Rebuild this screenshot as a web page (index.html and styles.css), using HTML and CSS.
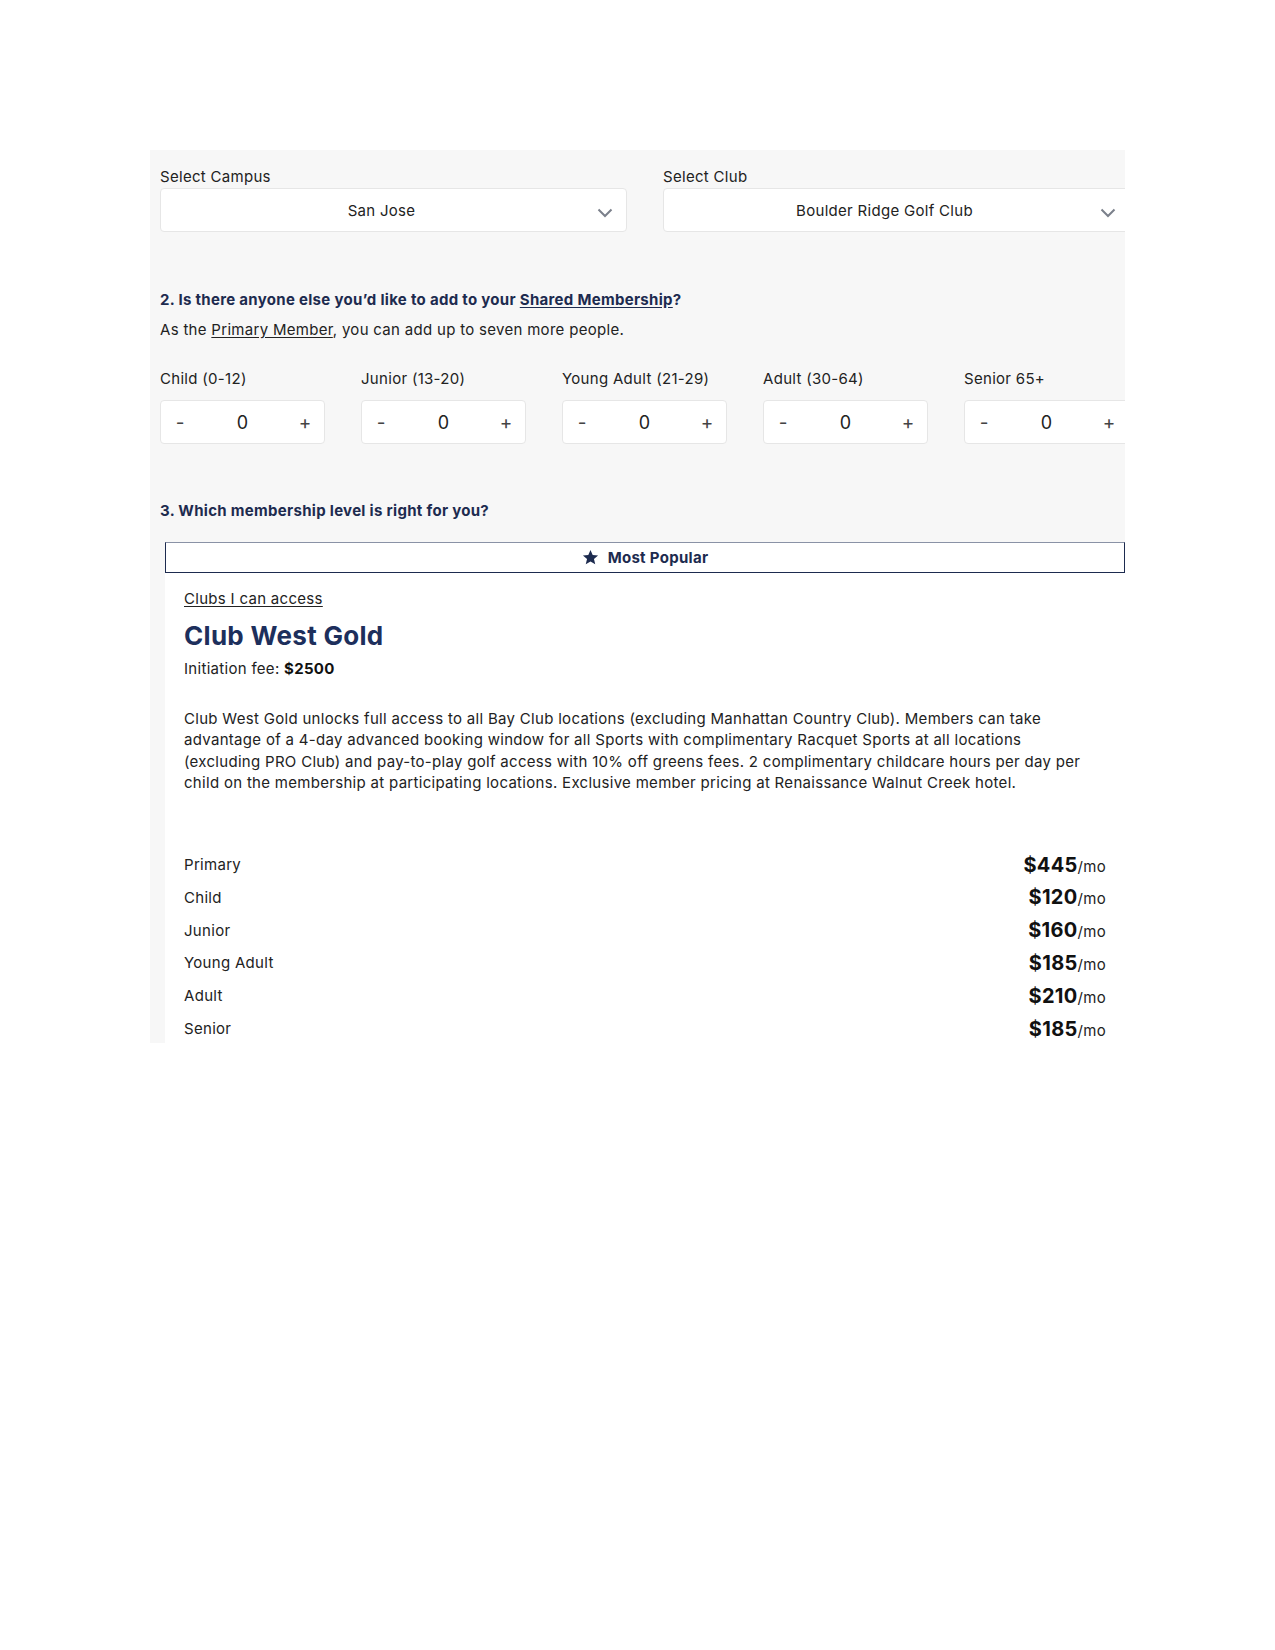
FILE: index.html
```html
<!DOCTYPE html>
<html lang="en">
<head>
<meta charset="utf-8">
<title>Membership</title>
<link rel="stylesheet" href="styles.css">
</head>
<body>
<div class="page">
  <div class="panel">
    <div class="selects">
      <div class="field">
        <div class="field-label">Select Campus</div>
        <div class="select">
          <span class="select-value">San Jose</span>
          <svg class="chevron" width="16" height="10" viewBox="0 0 16 10"><polyline points="1.5,1.5 8,8 14.5,1.5" fill="none" stroke="#7b808b" stroke-width="2"/></svg>
        </div>
      </div>
      <div class="field">
        <div class="field-label">Select Club</div>
        <div class="select">
          <span class="select-value">Boulder Ridge Golf Club</span>
          <svg class="chevron" width="16" height="10" viewBox="0 0 16 10"><polyline points="1.5,1.5 8,8 14.5,1.5" fill="none" stroke="#7b808b" stroke-width="2"/></svg>
        </div>
      </div>
    </div>

    <h2 class="section-title q2">2. Is there anyone else you’d like to add to your <span class="u">Shared Membership</span>?</h2>
    <p class="sub">As the <span class="u">Primary Member</span>, you can add up to seven more people.</p>

    <div class="counters">
      <div class="counter">
        <div class="field-label">Child (0-12)</div>
        <div class="stepper"><span class="btn">-</span><span class="val">0</span><span class="btn">+</span></div>
      </div>
      <div class="counter">
        <div class="field-label">Junior (13-20)</div>
        <div class="stepper"><span class="btn">-</span><span class="val">0</span><span class="btn">+</span></div>
      </div>
      <div class="counter">
        <div class="field-label">Young Adult (21-29)</div>
        <div class="stepper"><span class="btn">-</span><span class="val">0</span><span class="btn">+</span></div>
      </div>
      <div class="counter">
        <div class="field-label">Adult (30-64)</div>
        <div class="stepper"><span class="btn">-</span><span class="val">0</span><span class="btn">+</span></div>
      </div>
      <div class="counter">
        <div class="field-label">Senior 65+</div>
        <div class="stepper"><span class="btn">-</span><span class="val">0</span><span class="btn">+</span></div>
      </div>
    </div>

    <h2 class="section-title q3">3. Which membership level is right for you?</h2>

    <div class="card">
      <div class="banner">
        <svg class="star" width="17" height="17" viewBox="0 0 24 24"><path d="M12 1.5l3.1 7.1 7.6.6-5.8 5 1.8 7.5L12 17.7l-6.7 4 1.8-7.5-5.8-5 7.6-.6z" fill="#1d2b4f"/></svg>
        <span>Most Popular</span>
      </div>
      <div class="card-body">
        <a class="clubs-link">Clubs I can access</a>
        <h3 class="plan-name">Club West Gold</h3>
        <p class="fee">Initiation fee: <b>$2500</b></p>
        <p class="desc">Club West Gold unlocks full access to all Bay Club locations (excluding Manhattan Country Club). Members can take advantage of a 4-day advanced booking window for all Sports with complimentary Racquet Sports at all locations (excluding PRO Club) and pay-to-play golf access with 10% off greens fees. 2 complimentary childcare hours per day per child on the membership at participating locations. Exclusive member pricing at Renaissance Walnut Creek hotel.</p>
        <div class="prices">
          <div class="price-row"><span>Primary</span><span class="amt"><b>$445</b>/mo</span></div>
          <div class="price-row"><span>Child</span><span class="amt"><b>$120</b>/mo</span></div>
          <div class="price-row"><span>Junior</span><span class="amt"><b>$160</b>/mo</span></div>
          <div class="price-row"><span>Young Adult</span><span class="amt"><b>$185</b>/mo</span></div>
          <div class="price-row"><span>Adult</span><span class="amt"><b>$210</b>/mo</span></div>
          <div class="price-row"><span>Senior</span><span class="amt"><b>$185</b>/mo</span></div>
        </div>
      </div>
    </div>
  </div>
</div>
</body>
</html>
```

FILE: styles.css
```css
* { box-sizing: border-box; }
html, body { margin: 0; padding: 0; background: #ffffff; }
body {
  font-family: "Inter", "Noto Sans", sans-serif;
  color: #222222;
  font-size: 15px;
  letter-spacing: 0.3px;
}
.page {
  padding: 150px 0 0 150px;
}
.panel {
  width: 975px;
  height: 893px;
  background: #f7f7f7;
  overflow: hidden;
  padding: 17px 0 0 10px;
}
.selects {
  display: flex;
  gap: 36px;
  width: 1000px;
}
.field {
  width: 467px;
  flex-shrink: 0;
}
.field-label {
  font-size: 15px;
  line-height: 20px;
  margin-bottom: 1px;
  color: #222;
}
.select {
  position: relative;
  height: 44px;
  background: #fff;
  border: 1px solid #e6e6e6;
  border-radius: 4px;
  display: flex;
  align-items: center;
  justify-content: center;
  padding: 0 36px 0 12px;
}
.select-value {
  font-size: 15px;
  color: #222;
}
.chevron {
  position: absolute;
  right: 13px;
  top: 19px;
}
.section-title {
  margin: 0;
  font-size: 15px;
  line-height: 20px;
  font-weight: 700;
  color: #1d2b4f;
}
.q2 { margin-top: 58px; }
.q3 { margin-top: 57px; }
.u { text-decoration: underline; text-underline-offset: 2px; }
.sub {
  margin: 10px 0 0;
  font-size: 15px;
  line-height: 20px;
}
.counters {
  display: flex;
  gap: 36px;
  margin-top: 29px;
  width: 1100px;
}
.counter {
  width: 165px;
  flex-shrink: 0;
}
.counter .field-label { margin-bottom: 11px; }
.stepper {
  height: 44px;
  background: #fff;
  border: 1px solid #e6e6e6;
  border-radius: 4px;
  display: grid;
  grid-template-columns: 38px 1fr 38px;
  align-items: center;
  text-align: center;
  letter-spacing: 0;
}
.btn { font-size: 19px; color: #444; }
.val { font-size: 18px; color: #222; }
.card {
  margin: 21px 0 0 5px;
  width: 960px;
}
.banner {
  height: 31px;
  border: 1px solid #1d2b4f;
  border-top-color: #8a92a6;
  background: #fff;
  display: flex;
  align-items: center;
  justify-content: center;
  gap: 9px;
  font-size: 15px;
  font-weight: 700;
  color: #1d2b4f;
}
.card-body {
  background: #fff;
  padding: 16px 19px 40px 19px;
}
.clubs-link {
  display: block;
  font-size: 15px;
  line-height: 20px;
  text-decoration: underline;
  text-underline-offset: 2px;
  color: #222;
}
.plan-name {
  margin: 12px 0 0;
  font-size: 26px;
  line-height: 30px;
  font-weight: 700;
  letter-spacing: 0.3px;
  color: #1d2f5c;
}
.fee {
  margin: 8px 0 0;
  font-size: 15px;
  line-height: 20px;
}
.fee b { font-weight: 700; color: #111; }
.desc {
  margin: 29px 0 0;
  max-width: 906px;
  font-size: 15px;
  line-height: 21.3px;
}
.prices {
  margin-top: 55px;
}
.price-row {
  height: 32.8px;
  display: flex;
  justify-content: space-between;
  align-items: center;
  font-size: 15px;
}
.amt { font-size: 15px; color: #222; }
.amt b { font-size: 20px; font-weight: 700; color: #111; }
```
